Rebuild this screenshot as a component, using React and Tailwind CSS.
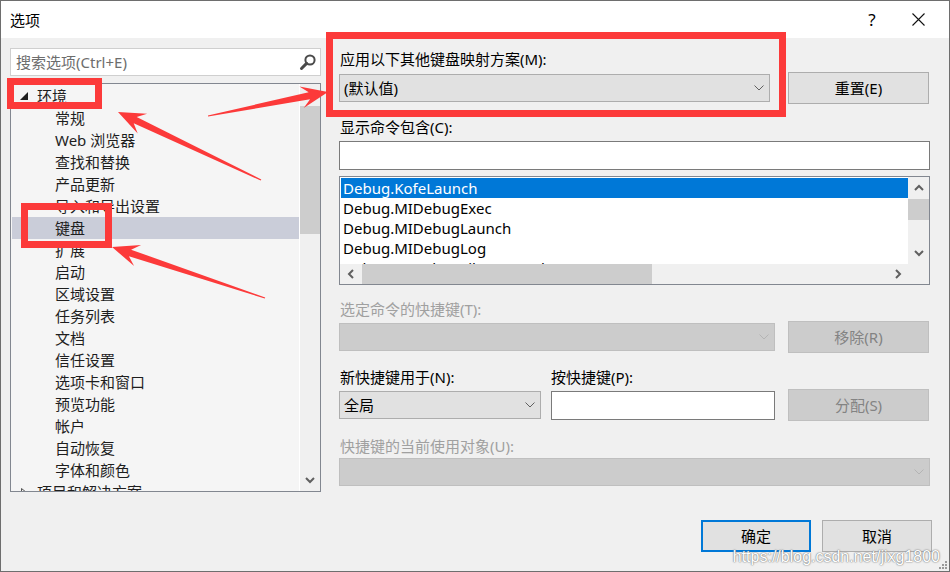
import React from "react";

const treeChildren = [
  "常规",
  "Web 浏览器",
  "查找和替换",
  "产品更新",
  "导入和导出设置",
  "键盘",
  "扩展",
  "启动",
  "区域设置",
  "任务列表",
  "文档",
  "信任设置",
  "选项卡和窗口",
  "预览功能",
  "帐户",
  "自动恢复",
  "字体和颜色",
];

const commands = [
  "Debug.KofeLaunch",
  "Debug.MIDebugExec",
  "Debug.MIDebugLaunch",
  "Debug.MIDebugLog",
  "Debug.MIDebugSilentLaunch",
];

function Chevron({ disabled }) {
  return (
    <svg width="10" height="6" viewBox="0 0 10 6">
      <path
        d="M0.5 0.5 L5 5 L9.5 0.5"
        fill="none"
        stroke={disabled ? "#b4b4b4" : "#606060"}
        strokeWidth="1"
      />
    </svg>
  );
}

function ScrollArrow({ dir }) {
  const paths = {
    up: "M1 6 L5 2 L9 6",
    down: "M1 2 L5 6 L9 2",
    left: "M6 1 L2 5 L6 9",
    right: "M2 1 L6 5 L2 9",
  };
  const horiz = dir === "left" || dir === "right";
  return (
    <svg
      width={horiz ? 8 : 10}
      height={horiz ? 10 : 8}
      viewBox={horiz ? "0 0 8 10" : "0 0 10 8"}
    >
      <path d={paths[dir]} fill="none" stroke="#606060" strokeWidth="2" />
    </svg>
  );
}

function Combo({ width, value, disabled }) {
  return (
    <div
      className={`flex h-[28px] items-center border ${
        disabled
          ? "border-[#bfbfbf] bg-[#cccccc]"
          : "border-[#adadad] bg-[#e1e1e1]"
      }`}
      style={{ width }}
    >
      <span className="flex-1 pl-[4px] leading-[20px]">{value}</span>
      <span className="flex w-[20px] justify-center">
        <Chevron disabled={disabled} />
      </span>
    </div>
  );
}

function Button({ children, disabled, primary, width = 141 }) {
  return (
    <div
      className={`flex h-[32px] items-center justify-center ${
        primary
          ? "border-2 border-[#0078d7] bg-[#e1e1e1]"
          : disabled
          ? "border border-[#bfbfbf] bg-[#cccccc] text-[#838383]"
          : "border border-[#adadad] bg-[#e1e1e1]"
      }`}
      style={{ width }}
    >
      {children}
    </div>
  );
}

function arrowPoints(tx, ty, hx, hy) {
  const dx = hx - tx;
  const dy = hy - ty;
  const len = Math.hypot(dx, dy);
  const ux = dx / len;
  const uy = dy / len;
  const nx = -uy;
  const ny = ux;
  const L = 27;
  const hw = 11;
  const sw = 3.5;
  const nk = 19;
  const bx = hx - ux * L;
  const by = hy - uy * L;
  const kx = hx - ux * nk;
  const ky = hy - uy * nk;
  const pts = [
    [tx + nx * 0.6, ty + ny * 0.6],
    [kx + nx * sw, ky + ny * sw],
    [bx + nx * hw, by + ny * hw],
    [hx, hy],
    [bx - nx * hw, by - ny * hw],
    [kx - nx * sw, ky - ny * sw],
    [tx - nx * 0.6, ty - ny * 0.6],
  ];
  return pts.map((p) => p.map((v) => v.toFixed(1)).join(",")).join(" ");
}

export default function App() {
  return (
    <div className="relative h-[572px] w-[950px] overflow-hidden border border-[#6e6e6e] bg-[#f0f0f0] font-['Noto_Sans','Noto_Sans_CJK_SC',sans-serif] text-[15px] text-black">
      {/* title bar */}
      <div className="flex h-[37px] items-center bg-white pl-[9px]">
        <span className="leading-[20px]">选项</span>
        <span className="ml-auto flex w-[46px] justify-center text-[17px] leading-[20px]">
          ?
        </span>
        <span className="mr-[8px] flex w-[46px] justify-center">
          <svg width="13" height="13" viewBox="0 0 13 13">
            <path d="M0.5 0.5 L12.5 12.5 M12.5 0.5 L0.5 12.5" stroke="#111" strokeWidth="1.1" />
          </svg>
        </span>
      </div>

      <div className="flex">
        {/* left column */}
        <div className="ml-[9px] w-[311px]">
          <div className="mt-[10px] flex h-[28px] items-center border border-[#cfcfcf] bg-white">
            <span className="flex-1 pl-[5px] leading-[20px] text-[#6d6d6d]">
              搜索选项(Ctrl+E)
            </span>
            <svg className="mr-[3px]" width="18" height="18" viewBox="0 0 18 18">
              <circle cx="11" cy="7" r="4.6" fill="none" stroke="#4a4a4a" strokeWidth="2" />
              <path d="M7.6 10.4 L2.5 15.5" stroke="#4a4a4a" strokeWidth="3" strokeLinecap="round" />
            </svg>
          </div>

          <div className="mt-[7px] flex h-[409px] border border-[#828790] bg-[#f5f5f5]">
            <div className="flex-1 overflow-hidden pl-[1px] pt-[1px] text-[#1e1e1e]">
              <div className="flex h-[22px] items-center">
                <svg className="ml-[8px]" width="8" height="8" viewBox="0 0 8 8">
                  <polygon points="8,0 8,8 0,8" fill="#1e1e1e" />
                </svg>
                <span className="ml-[9px] leading-[20px]">环境</span>
              </div>
              {treeChildren.map((name) => (
                <div
                  key={name}
                  className={`flex h-[22px] items-center pl-[43px] ${
                    name === "键盘" ? "bg-[#cacdd9]" : ""
                  }`}
                >
                  <span className="leading-[20px]">{name}</span>
                </div>
              ))}
              <div className="flex h-[22px] items-center">
                <svg className="ml-[9px]" width="6" height="9" viewBox="0 0 6 9">
                  <polygon points="0.5,0.5 5.5,4.5 0.5,8.5" fill="none" stroke="#555" strokeWidth="1" />
                </svg>
                <span className="ml-[10px] leading-[20px]">项目和解决方案</span>
              </div>
            </div>
            <div className="flex w-[21px] flex-col border-l border-white bg-[#f0f0f0]">
              <div className="flex h-[22px] items-center justify-center">
                <ScrollArrow dir="up" />
              </div>
              <div className="h-[128px] bg-[#cdcdcd]" />
              <div className="flex-1" />
              <div className="flex h-[22px] items-center justify-center">
                <ScrollArrow dir="down" />
              </div>
            </div>
          </div>
        </div>

        {/* right column */}
        <div className="ml-[18px] flex w-[593px] flex-col">
          <div className="mt-[11px] pl-[1px] leading-[20px]">
            应用以下其他键盘映射方案(M):
          </div>
          <div className="mt-[3px] flex h-[32px] items-center gap-[18px]">
            <Combo width={431} value="(默认值)" />
            <Button>重置(E)</Button>
          </div>

          <div className="mt-[13px] pl-[1px] leading-[20px]">显示命令包含(C):</div>
          <div className="mt-[4px] h-[29px] w-[591px] border border-[#7a7a7a] bg-white" />

          <div className="mt-[6px] grid h-[109px] w-[591px] grid-cols-[1fr_21px] grid-rows-[1fr_20px] border border-[#828790] bg-[#f0f0f0]">
            <div className="overflow-hidden bg-white pl-[1px] pt-[1px]">
              {commands.map((c, i) => (
                <div
                  key={c}
                  className={`flex h-[20px] items-center pl-[2px] ${
                    i === 0 ? "bg-[#0078d7] text-white" : ""
                  }`}
                >
                  <span className="leading-[20px]">{c}</span>
                </div>
              ))}
            </div>
            <div className="flex flex-col">
              <div className="flex h-[22px] items-center justify-center">
                <ScrollArrow dir="up" />
              </div>
              <div className="h-[21px] bg-[#cdcdcd]" />
              <div className="flex-1" />
              <div className="flex h-[22px] items-center justify-center">
                <ScrollArrow dir="down" />
              </div>
            </div>
            <div className="flex items-stretch">
              <div className="flex w-[21px] items-center justify-center">
                <ScrollArrow dir="left" />
              </div>
              <div className="ml-[1px] w-[290px] bg-[#cdcdcd]" />
              <div className="flex-1" />
              <div className="flex w-[21px] items-center justify-center">
                <ScrollArrow dir="right" />
              </div>
            </div>
            <div />
          </div>

          <div className="mt-[14px] pl-[1px] leading-[20px] text-[#a0a0a0]">
            选定命令的快捷键(T):
          </div>
          <div className="mt-[2px] flex h-[32px] items-center gap-[13px]">
            <Combo width={436} disabled />
            <Button disabled>移除(R)</Button>
          </div>

          <div className="mt-[14px] flex leading-[20px]">
            <span className="w-[212px] pl-[1px]">新快捷键用于(N):</span>
            <span>按快捷键(P):</span>
          </div>
          <div className="mt-[2px] flex h-[32px] items-center">
            <Combo width={202} value="全局" />
            <div className="ml-[10px] h-[29px] w-[224px] border border-[#7a7a7a] bg-white" />
            <div className="ml-[13px]">
              <Button disabled>分配(S)</Button>
            </div>
          </div>

          <div className="mt-[15px] pl-[1px] leading-[20px] text-[#a0a0a0]">
            快捷键的当前使用对象(U):
          </div>
          <div className="mt-[2px]">
            <Combo width={591} disabled />
          </div>

          <div className="mt-[34px] flex justify-end gap-[11px]">
            <Button primary width={110}>
              确定
            </Button>
            <Button width={110}>取消</Button>
          </div>
        </div>
      </div>

      {/* watermark */}
      <div className="absolute bottom-[4px] right-[9px] font-['Liberation_Sans',sans-serif] text-[16px] leading-[20px] text-white [text-shadow:0_0_1px_#666,0_0_2px_#888]">
        https://blog.csdn.net/jixg1800
      </div>

      {/* resize grip */}
      <svg className="absolute bottom-[1px] right-[1px]" width="11" height="11" viewBox="0 0 11 11">
        {[
          [8, 0],
          [5, 3],
          [8, 3],
          [2, 6],
          [5, 6],
          [8, 6],
        ].map(([x, y]) => (
          <rect key={`${x}-${y}`} x={x} y={y + 2} width="2" height="2" fill="#9a9a9a" />
        ))}
      </svg>

      {/* red annotations */}
      <svg className="pointer-events-none absolute left-[-1px] top-[-1px]" width="950" height="572">
        <rect x="10.5" y="81.5" width="88" height="24" fill="none" stroke="#fc3a3a" strokeWidth="7" />
        <rect x="329.5" y="35.5" width="453" height="78" fill="none" stroke="#fc3a3a" strokeWidth="7" />
        <rect x="24.5" y="206.5" width="84" height="38" fill="none" stroke="#fc3a3a" strokeWidth="7" />
        <polygon points={arrowPoints(261, 180, 118, 112)} fill="#fc3a3a" />
        <polygon points={arrowPoints(208, 116, 328, 92)} fill="#fc3a3a" />
        <polygon points={arrowPoints(265, 298, 112, 247)} fill="#fc3a3a" />
      </svg>
    </div>
  );
}
